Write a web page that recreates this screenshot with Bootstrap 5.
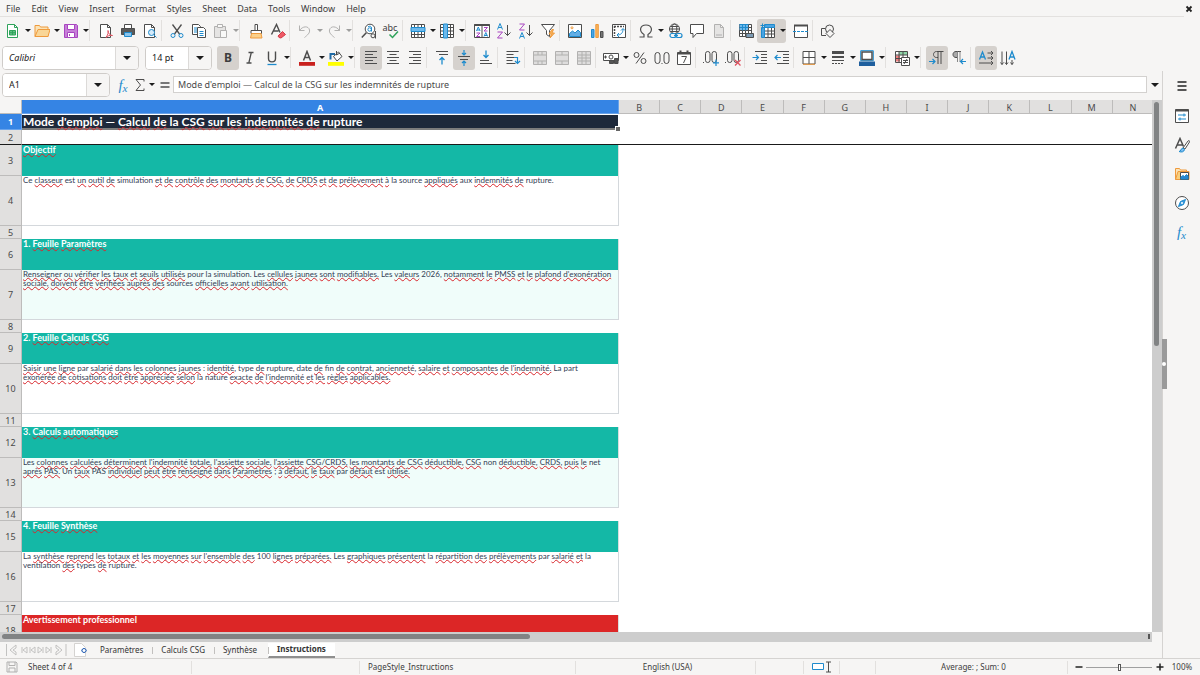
<!DOCTYPE html>
<html lang="fr">
<head>
<meta charset="utf-8">
<meta name="viewport" content="width=device-width, initial-scale=1">
<title>Calcul CSG - Instructions</title>
<link href="https://cdn.jsdelivr.net/npm/bootstrap@5.3.0/dist/css/bootstrap.min.css" rel="stylesheet">
<style>
:root{--ink:#3d3d3d;--line:#d5d3d1;--face:#f6f5f4;--blue:#1e8bcd}
body{font-family:"Noto Sans","Open Sans",sans-serif;font-size:8px;line-height:12px;color:var(--ink);background:var(--face)}
button{background:none;border:0;padding:0;color:inherit;font:inherit}
svg{display:block;fill:none;stroke:#4d4d4d;stroke-width:1}
.ic{width:16px;height:16px}
.menubar{height:17px;font-size:9px;padding-left:6px;flex:none}
.menubar .rule{position:absolute;left:0;right:16px;bottom:0;height:1px;background:#e3e1df}
.menubar a{color:var(--ink);text-decoration:none;line-height:17px}
.menulist{gap:11px}
.closer{margin-right:6px;width:10px}
.toolrow{height:27px;padding-left:2px;flex:none}
.tb{width:22px;height:24px;border-radius:3px;display:flex;align-items:center;justify-content:center;flex:none}
.tb.on,.dd.on{background:#d5d1cd}
.tb.on.left{border-radius:3px 0 0 3px}.dd.on{border-radius:0 3px 3px 0}
.dd{width:7px;height:24px;flex:none;display:flex;align-items:center;justify-content:center}
.caret{width:0;height:0;border:3px solid transparent;border-top:3px solid #1c1c1c;border-bottom:0}
.caret.big{border-width:4px 4px 0}
.off{opacity:.4}
.tsep{width:5px;height:21px;flex:none;border-left:1px solid #e2e0de}
.dd + .tsep{width:6px}
.letter{font-size:12px;line-height:20px}
.combo{border:1px solid #cfccc9;border-radius:4px;background:#fff;overflow:hidden;height:24px;flex:none;display:flex}
.combo input{border:0;outline:0;padding:0 6px;min-width:0;flex:1;color:#222;font-size:9px;background:#fff}
.combo button{width:23px;background:var(--face);border-left:1px solid #dcdad8;display:flex;align-items:center;justify-content:center}
.c-font{width:137px}.c-size{width:67px;margin:0 5px 0 6px}.c-name{width:108px}
.formula{height:29px;padding:0 0 2px 2px}
.formula .tb{width:18px}
.formula .fx-text{height:17px;border:1px solid #d3d1cf;background:#fff;font-size:9px;color:#4a4a4a;padding:0 4px;outline:0;min-width:0;border-radius:0}
.sumdd{margin-right:2px}
.fxg{font:italic 15px/16px "Liberation Serif",serif;color:var(--blue)}
.sidebar{width:38px;border-left:1px solid var(--line);padding-top:6px}
.sidebar button{height:29px;width:100%;display:flex;align-items:center;justify-content:center}
.sidebar .burger{height:18px;margin-bottom:6px}
.sidegrip{position:absolute;left:-1px;top:268px;width:5px;height:50px;background:#9a9a9a}
.sidegrip::after{content:"";position:absolute;left:0;top:23px;width:4px;height:4px;border-radius:50%;background:#fff}
.sheetbox{background:#fff;overflow:hidden;min-height:0}
.minh0{min-height:0;min-width:0}
.grid{table-layout:fixed;width:calc(100% + 2px);border-collapse:separate;border-spacing:0}
.grid .cn{width:22px}.grid .ca{width:597px}
.grid th{font-weight:400;font-size:9px;line-height:11px;text-align:center;background:#e1e0df;color:#4a4a4a;border-right:1px solid #bdbcbb;border-bottom:1px solid #bdbcbb;padding:0;vertical-align:middle}
.grid thead th{height:14px;padding-top:1px}
.grid thead th:first-child{background:var(--face)}
.grid th.sel{background:#3584e4;color:#fff;font-weight:700;border-color:#6aa3ea}
.grid td{padding:0;vertical-align:top;white-space:nowrap;font-family:Lato,sans-serif}
.grid .acell{padding-left:1px}
.title-row{height:16px}.title-row .acell{background:#1e293b;color:#fff;font-size:12px;line-height:13px;font-weight:700;border-top:1px solid #fff;border-bottom:2px solid #7d7d7d;position:relative;border-right:1px solid #fff}
.handle{position:absolute;right:-2px;bottom:-3px;width:4px;height:4px;background:#666;outline:1px solid #fff}
.frozen{height:15px}.frozen td{border-bottom:1px solid #1a1a1a}.frozen th{border-bottom-color:#1a1a1a}
.sec{height:31px}.sec .acell{background:#14b8a6;color:#fff;font-weight:700;font-size:9px;line-height:9px;border-right:1px solid #d9dede}
.sec.warn .acell{background:#dc2626}
.txt{height:50px}.txt .acell{color:#334155;font-size:8px;line-height:9px;border-right:1px solid #d4d8dc;border-bottom:1px solid #d4d8dc}
.txt.mint .acell{background:#f0fdfa}
.gap13{height:13px}
u{text-decoration:underline wavy #d8262c 1px;text-decoration-skip-ink:none;text-underline-offset:0}
.vbar{width:10px;background:#cdcdcd;padding:2px 3px 0 2px}
.vbar div{height:46%;background:#818384;border-radius:3px}
.hbar{height:10px;margin-right:10px;background:#cdcdcd;padding:2px 2px 3px;display:flex;justify-content:space-between}
.hbar .th1{width:46%;background:#818384;border-radius:3px}.hbar .th2{width:2px;background:#555}
.tabs{height:16px;padding-left:6px}
.addsheet{margin:0 4px 0 7px}
.tabs button.tabx{height:15px;padding:0 9px 0 8px;border-left:1px solid transparent;position:relative;color:#333}
.tabs .tabx + .tabx::before{content:"";position:absolute;left:-1px;top:4px;height:7px;border-left:1px solid #c2c0be}
.tabs .tabx.cur{background:#fff;font-weight:700;border-bottom:2px solid #8f8f8f;margin-left:2px}
.statusbar{height:17px;border-top:1px solid var(--line)}
.statusbar > div{border-right:1px solid #e2e0de;height:13px;display:flex;align-items:center;justify-content:center;flex:none}
.w2p{width:2%}.w3p{width:3%}.w4p{width:4%}.w14p{width:14%}.w15p{width:15%}.w18p{width:18%}
.zoombox{width:8%;padding:0 0 0 7px}
.zoomer{appearance:none;flex:1;min-width:0;height:9px;background:linear-gradient(#a0a0a0,#a0a0a0) center/100% 1px no-repeat;margin:0 4px 0 3px}
.zoomer::-webkit-slider-thumb{appearance:none;width:3px;height:7px;border:1px solid #555;background:#fff}
.bold{stroke:#222;stroke-width:1.5}
.b{stroke:#1e8bcd}.o{stroke:#ef9a3c}.g{stroke:#2fa35b}.p{stroke:#a845c0}.r{stroke:#e05260}
</style>
</head>
<body class="vh-100 d-flex flex-column overflow-hidden">
<nav class="menubar position-relative d-flex align-items-center justify-content-between">
 <div class="menulist d-flex"><a href="#">File</a><a href="#">Edit</a><a href="#">View</a><a href="#">Insert</a><a href="#">Format</a><a href="#">Styles</a><a href="#">Sheet</a><a href="#">Data</a><a href="#">Tools</a><a href="#">Window</a><a href="#">Help</a></div>
 <button class="closer" aria-label="Close"><svg width="10" height="10" viewBox="0 0 10 10"><path stroke="#222" stroke-width="1.800" d="M2.500 2.500l5 5M7.500 2.500l-5 5"/></svg></button>
 <span class="rule"></span>
</nav>

<div class="toolrow d-flex align-items-center">
 <button class="tb" aria-label="New"><svg class="ic" viewBox="0 0 16 16"><path class="g" fill="#fff" d="M2.500 1.500h7l3 3v10h-10z"/><path class="g" d="M9.500 1.500v3h3"/><path class="g" fill="#5fc283" d="M4.500 7.500h6v4.500h-6zM4.500 9.700h6M7.500 7.500v4.500"/></svg></button><button class="dd" aria-label="New options"><i class="caret"></i></button>
 <button class="tb" aria-label="Open"><svg class="ic" viewBox="0 0 16 16"><path class="o" fill="#fbe3b6" d="M1 13.500v-11h4.500l1 1.500h7.500v9.500z"/><path class="o" fill="#f9d697" d="M1 13.500l3-7h12l-2 7z"/></svg></button><button class="dd" aria-label="Open options"><i class="caret"></i></button>
 <button class="tb" aria-label="Save"><svg class="ic" viewBox="0 0 16 16"><path class="p" fill="#c77fd8" d="M1.500 1.500h12l1 1v12h-13z"/><path class="p" fill="#fff" d="M4.500 1.500h7v5h-7zM4.500 9.500h7v5h-7z"/><path class="p" d="M6.500 11v2"/></svg></button><button class="dd" aria-label="Save options"><i class="caret"></i></button>
 <i class="tsep"></i>
 <button class="tb" aria-label="Export as PDF"><svg class="ic" viewBox="0 0 16 16"><path fill="#fff" d="M2.500 1.500h7l3 3v10h-10z"/><path d="M9.500 1.500v3h3"/><path class="r" fill="#fff" d="M8 14.500c2-3 2.500-5 2-7 0 3 2 5 4.500 5-3-.6-5 .5-6.500 2z"/></svg></button>
 <button class="tb" aria-label="Print"><svg class="ic" viewBox="0 0 16 16"><path fill="#fff" d="M4.500 1.500h7v4h-7z"/><path fill="#5a5a5a" d="M1.500 5.500h13v6h-13z"/><path class="b" fill="#8cc4ec" d="M4.500 9.500h7v4h-7z"/></svg></button>
 <button class="tb" aria-label="Print Preview"><svg class="ic" viewBox="0 0 16 16"><path fill="#fff" d="M2.500 1.500h7l3 3v10h-10z"/><path d="M9.500 1.500v3h3"/><circle class="b" cx="9.500" cy="9.500" r="3" fill="#d6ebfa"/><path class="b" d="M11.800 11.800l2.700 2.700"/></svg></button>
 <i class="tsep"></i>
 <button class="tb" aria-label="Cut"><svg class="ic" viewBox="0 0 16 16"><path stroke-width="1.300" d="M3.500 1.500l7 9.500M12.500 1.500l-7 9.500"/><circle class="b" cx="4" cy="12.500" r="2"/><circle class="b" cx="12" cy="12.500" r="2"/></svg></button>
 <button class="tb" aria-label="Copy"><svg class="ic" viewBox="0 0 16 16"><path fill="#fff" d="M1.500 1.500h6l2 2v8h-8z"/><path fill="#fff" d="M6.500 4.500h6l2 2v8h-8z"/><path class="b" d="M3 5h3M3 7h3M3 9h3M8.500 8.500h4M8.500 10.500h4M8.500 12.500h4"/></svg></button>
 <button class="tb off" aria-label="Paste"><svg class="ic" viewBox="0 0 16 16"><path fill="#ccc" d="M1.500 3.500h11v11h-11z"/><path fill="#fff" d="M4.500 1.500h5v3h-5zM7.500 7.500h6v7h-6z"/></svg></button><button class="dd off" aria-label="Paste options"><i class="caret"></i></button>
 <i class="tsep"></i>
 <button class="tb" aria-label="Clone formatting"><svg class="ic" viewBox="0 0 16 16"><path fill="#fff" d="M7 1.500h2.500v6H7zM3 7.500h10.500v3H3z"/><path class="o" fill="#fbd08b" d="M3.500 10.500h9.500l1 4.500H2.500z"/></svg></button>
 <button class="tb" aria-label="Clear formatting"><svg class="ic" viewBox="0 0 16 16"><path stroke-width="1.400" d="M1.500 11.500l5-10 3.500 8M3.500 8h5"/><path d="M8 13l4.500-4.500 3 3-4.500 3.500-2-.5z" fill="#ee5a66" stroke="#d33a48"/></svg></button>
 <i class="tsep"></i>
 <button class="tb off" aria-label="Undo"><svg class="ic" viewBox="0 0 16 16"><path d="M2.500 2.500v5h5M2.500 7.500c3-4.500 9-5 10-.5.600 3-2 5-5 7.500"/></svg></button><button class="dd off" aria-label="Undo options"><i class="caret"></i></button>
 <button class="tb off" aria-label="Redo"><svg class="ic" viewBox="0 0 16 16"><path d="M13.500 2.500v5h-5M13.500 7.500c-3-4.500-9-5-10-.5-.600 3 2 5 5 7.500"/></svg></button><button class="dd off" aria-label="Redo options"><i class="caret"></i></button>
 <i class="tsep"></i>
 <button class="tb" aria-label="Find and Replace"><svg class="ic" viewBox="0 0 16 16"><path stroke-width="1.500" d="M5.500 9.500L.8 14.500"/><circle cx="9" cy="6" r="4.800" fill="#fff"/><circle class="b" cx="8.600" cy="6.500" r="1.700"/><path class="b" d="M7 3.800c2-1 3.500-.5 3.500 1.200v3.500"/><circle cx="12" cy="12.800" r="2" fill="#f6f5f4"/><path d="M14.500 8v7.500"/></svg></button>
 <button class="tb" aria-label="Spelling"><svg class="ic overflow-visible" viewBox="0 0 16 16"><text x="-.5" y="7.500" font-size="9" fill="#3d3d3d" stroke="none">abc</text><path class="g" stroke-width="1.500" d="M6.500 11.500l3 3 5.500-6"/></svg></button>
 <i class="tsep"></i>
 <button class="tb" aria-label="Row"><svg class="ic" viewBox="0 0 16 16"><path fill="#fff" d="M1.500 1.500h13v13h-13z"/><path d="M1.500 11.500h13M4.500 1.500v13M8 1.500v13M11.500 1.500v13M1.500 8.500h13"/><path fill="#6db9ec" class="b" d="M1 4.500h14v4H1z"/></svg></button><button class="dd" aria-label="Row options"><i class="caret"></i></button>
 <button class="tb" aria-label="Column"><svg class="ic" viewBox="0 0 16 16"><path fill="#fff" d="M1.500 1.500h13v13h-13z"/><path d="M11.500 1.500v13M1.500 4.500h13M1.500 8h13M1.500 11.500h13"/><path fill="#6db9ec" class="b" d="M4.500 1h4v14h-4z"/></svg></button><button class="dd" aria-label="Column options"><i class="caret"></i></button>
 <i class="tsep"></i>
 <button class="tb" aria-label="Sort"><svg class="ic" viewBox="0 0 16 16"><path fill="#fff" d="M.5 1.500h15v13H.500zM8 3v11.500"/><path stroke-width="2" d="M.5 2h15"/><path class="b" d="M2.500 8l1.800-4 1.800 4M3 7h2.600M10 13.500l1.800-4 1.800 4M10.500 12.500h2.600"/><path class="p" d="M10 4.500h3.500L10 8h3.500M2.500 10H6l-3.500 3.500H6"/></svg></button>
 <button class="tb" aria-label="Sort Ascending"><svg class="ic" viewBox="0 0 16 16"><path class="b" d="M1.500 6.500l2.500-6 2.500 6M2.300 4.500h3.400"/><path class="p" d="M1.500 9h5l-5 6h5"/><path d="M11.500 2v10.500M8.500 9.500l3 3 3-3"/></svg></button>
 <button class="tb" aria-label="Sort Descending"><svg class="ic" viewBox="0 0 16 16"><path class="p" d="M1.500 1h5l-5 6h5"/><path class="b" d="M1.500 15.500l2.500-6 2.500 6M2.300 13.500h3.400"/><path d="M11.500 2v10.500M8.500 9.500l3 3 3-3"/></svg></button>
 <button class="tb" aria-label="AutoFilter"><svg class="ic" viewBox="0 0 16 16"><path fill="#fff" d="M1.500 1.500h13l-5 6v6l-3-2v-4z"/><path fill="#f8b35c" class="o" d="M12 6.500l-3 4.500h2.500L10 15l4.500-5H12l1.500-3.500z"/></svg></button>
 <i class="tsep"></i>
 <button class="tb" aria-label="Image"><svg class="ic" viewBox="0 0 16 16"><path fill="#fff" d="M1.500 1.500h13v13h-13z"/><path fill="#62aee6" class="b" d="M2.500 13.500v-3l3-2.500 2.500 2 3-3 2.500 2.500v4z"/><circle class="o" cx="5" cy="4.800" r="1"/></svg></button>
 <button class="tb" aria-label="Chart"><svg class="ic" viewBox="0 0 16 16"><path fill="#4da3e3" class="b" d="M2.500 6.500h2.500v8H2.500z"/><path fill="#f8b35c" class="o" d="M6.800 1.500h2.500v13H6.800z"/><path fill="#777" d="M11.500 8.500H14v6h-2.500z"/></svg></button>
 <button class="tb" aria-label="Pivot Table"><svg class="ic" viewBox="0 0 16 16"><path fill="#fff" d="M1.500 1.500h13v13h-13z"/><path stroke-width="1.500" stroke-dasharray="2 1" d="M3 3.500h10M3.500 3v10"/><path class="b" d="M6 12c4 0 6-2 6-6M10 7.500l2-2 2 2M8 10l-2 2 2 2"/></svg></button>
 <i class="tsep"></i>
 <button class="tb" aria-label="Special Character"><svg class="ic" viewBox="0 0 16 16"><path stroke-width="1.200" d="M1.500 14h4.500v-2.500C.5 8 2 2 8 2s7.500 6 2 9.500V14h4.500"/></svg></button><button class="dd" aria-label="Character options"><i class="caret"></i></button>
 <button class="tb" aria-label="Hyperlink"><svg class="ic" viewBox="0 0 16 16"><circle cx="7.500" cy="6" r="5" fill="#fff"/><ellipse cx="7.500" cy="6" rx="2.300" ry="5"/><path d="M2.500 6h10M3.300 3.500h8.400M3.300 8.500h8.400"/><g class="b" fill="#f6f5f4" stroke-width="1.200"><rect x="3" y="10.500" width="6" height="4" rx="2"/><rect x="9" y="10.500" width="6" height="4" rx="2"/><path d="M7 12.500h4"/></g></svg></button>
 <button class="tb" aria-label="Comment"><svg class="ic" viewBox="0 0 16 16"><path fill="#fff" d="M1.500 1.500h13v9h-7l-3.500 4v-4H1.500z"/></svg></button>
 <button class="tb off" aria-label="Headers and Footers"><svg class="ic" viewBox="0 0 16 16"><path fill="#ccc" d="M3.500 1.500h6l3 3v10h-9zM9.500 1.500v3h3M5 12h6"/></svg></button>
 <i class="tsep"></i>
 <button class="tb" aria-label="Print Area"><svg class="ic" viewBox="0 0 16 16"><path fill="#fff" d="M1.500 1.500h12v12h-12z"/><path fill="#6db9ec" stroke="none" d="M1.500 1.500h9v6h-9z"/><path d="M1.500 4.500h12M1.500 7.500h12M1.500 10.500h12M4.500 7.500v6M7.500 7.500v6M10.500 1.500v12"/><path class="b" d="M1.500 4.500h9M4.500 1.500v6M7.500 1.500v6M1.500 1.500h9"/><path fill="#7d9cb5" d="M8 10.500h7.500v4H8z"/></svg></button>
 <button class="tb on left" aria-label="Freeze Rows and Columns"><svg class="ic" viewBox="0 0 16 16"><path fill="#fff" d="M4.500 4.500h10v10h-10zM4.500 8h10M4.500 11h10M8 4.500v10M11.500 4.500v10"/><path fill="#4aa3e2" class="b" d="M1.500 4.500h3v10h-3zM4.500 1.500h10v3h-10z"/><path class="b" d="M2.500.5v5M.5 2.500h5"/></svg></button><button class="dd on" aria-label="Freeze options"><i class="caret"></i></button>
 <button class="tb ms-1" aria-label="Split Window"><svg class="ic" viewBox="0 0 16 16"><path fill="#fff" d="M1.500 2.500h13v12h-13z"/><path stroke-width="2" d="M1 2.500h14"/><path class="b" stroke-dasharray="3 1" d="M0 8.500h16"/></svg></button>
 <i class="tsep"></i>
 <button class="tb" aria-label="Show Draw Functions"><svg class="ic" viewBox="0 0 16 16"><path d="M6 12.500H1.500v-7H5"/><circle cx="9.500" cy="6" r="4"/><path fill="#f6f5f4" d="M10 6.500l4 4-4 4-4-4z"/></svg></button>
</div>

<div class="toolrow d-flex align-items-center">
 <div class="combo c-font"><input class="fst-italic" aria-label="Font name" value="Calibri"><button aria-label="Font list"><i class="caret big"></i></button></div>
 <div class="combo c-size"><input aria-label="Font size" value="14 pt"><button aria-label="Size list"><i class="caret big"></i></button></div>
 <button class="tb on" aria-label="Bold"><b class="letter">B</b></button>
 <button class="tb" aria-label="Italic"><svg class="ic" viewBox="0 0 16 16"><path stroke-width="1.300" d="M6.500 2.500h5M4.500 13h5M9.300 2.500L6.800 13"/></svg></button>
 <button class="tb" aria-label="Underline"><svg class="ic" viewBox="0 0 16 16"><path stroke-width="1.400" d="M4.500 1.500v7c0 4.500 7 4.500 7 0v-7"/><path class="b" stroke-width="1.300" d="M3.500 14.500h9"/></svg></button><button class="dd" aria-label="Underline options"><i class="caret"></i></button>
 <i class="tsep"></i>
 <button class="tb" aria-label="Font Color"><svg class="ic" viewBox="0 0 16 16"><path stroke-width="1.500" d="M4.500 10.500L8 1.500l3.500 9M5.500 7.500h5"/><path fill="#c9211e" stroke="none" d="M0 12h16v3.800H0z"/></svg></button><button class="dd" aria-label="Font colors"><i class="caret"></i></button>
 <button class="tb" aria-label="Highlighting"><svg class="ic" viewBox="0 0 16 16"><path stroke="#1e6aa5" stroke-width="2" d="M2.500 9.500V4H7"/><path fill="#fff" d="M5.500 6.500l5-4.500 3.500 4.500-5 4.500z"/><path d="M8.500 5V1M8.500 5L12 3"/><path fill="#ff0" stroke="none" d="M0 12h16v3.800H0z"/></svg></button><button class="dd" aria-label="Highlight colors"><i class="caret"></i></button>
 <i class="tsep"></i>
 <button class="tb on" aria-label="Align Left"><svg class="ic" viewBox="0 0 16 16"><path d="M2 1.500h12M2 4.500h8M2 7.500h12M2 10.500h8M2 13.500h12"/></svg></button>
 <button class="tb" aria-label="Center"><svg class="ic" viewBox="0 0 16 16"><path d="M2 1.500h12M4.500 4.500h7M2 7.500h12M4.500 10.500h7M2 13.500h12"/></svg></button>
 <button class="tb" aria-label="Align Right"><svg class="ic" viewBox="0 0 16 16"><path d="M2 1.500h12M6 4.500h8M2 7.500h12M6 10.500h8M2 13.500h12"/></svg></button>
 <i class="tsep"></i>
 <button class="tb" aria-label="Align Top"><svg class="ic" viewBox="0 0 16 16"><path d="M2 1.500h12M5 4.500h9"/><path class="b" stroke-width="1.300" d="M8 14.500V8M5.500 10L8 7.500l2.500 2.500"/></svg></button>
 <button class="tb on" aria-label="Center Vertically"><svg class="ic" viewBox="0 0 16 16"><path d="M2 6.500h12M4 9.500h8"/><path class="b" stroke-width="1.200" d="M8 0v5M6 3l2 2 2-2M8 16v-5M6 13l2-2 2 2"/></svg></button>
 <button class="tb" aria-label="Align Bottom"><svg class="ic" viewBox="0 0 16 16"><path d="M2 10.500h9M2 13.500h12"/><path class="b" stroke-width="1.300" d="M8 .5V7M5.500 5L8 7.500 10.500 5"/></svg></button>
 <i class="tsep"></i>
 <button class="tb" aria-label="Wrap Text"><svg class="ic" viewBox="0 0 16 16"><path d="M1.500 1.500h12M1.500 4.500h7M1.500 7.500h9M1.500 10.500h6M1.500 13.500h9"/><path class="b" stroke-width="1.200" d="M9 7.500h3.500V13M10 11l2.500 2.500L15 11"/></svg></button>
 <i class="tsep"></i>
 <button class="tb off" aria-label="Merge and Center Cells"><svg class="ic" viewBox="0 0 16 16"><path fill="#bbb" d="M1.500 1.500h13v13h-13zM1.500 5h13M1.500 11h13M6 1.500V5M10 1.500V5M6 11v3.500M10 11v3.500"/></svg></button>
 <button class="tb off" aria-label="Merge Cells"><svg class="ic" viewBox="0 0 16 16"><path fill="#bbb" d="M1.500 1.500h13v13h-13zM1.500 5h13M1.500 11h13M8 1.500V5M8 11v3.500"/></svg></button>
 <button class="tb off" aria-label="Unmerge Cells"><svg class="ic" viewBox="0 0 16 16"><path fill="#bbb" d="M1.500 1.500h13v13h-13zM1.500 5h13M1.500 8h13M1.500 11h13M6 1.500v13M10 1.500v13"/></svg></button>
 <i class="tsep"></i>
 <button class="tb" aria-label="Format as Currency"><svg class="ic" viewBox="0 0 16 16"><path fill="#fff" d="M.5 3.500h15v7H.500z"/><circle cx="8" cy="7" r="2"/><path fill="#555" d="M6.500 10.500h4v3h-4zM11.500 8.500h3.500v5h-3.500zM2 6h1v2H2z"/></svg></button><button class="dd" aria-label="Currency options"><i class="caret"></i></button>
 <button class="tb" aria-label="Format as Percent"><svg class="ic" viewBox="0 0 16 16"><circle cx="4.500" cy="5" r="2.500"/><circle cx="11.500" cy="11" r="2.500"/><path d="M12 2.500L4 13.500"/></svg></button>
 <button class="tb" aria-label="Format as Number"><svg class="ic" viewBox="0 0 16 16"><rect x="1" y="2.500" width="5" height="11" rx="2.500"/><rect x="10" y="2.500" width="5" height="11" rx="2.500"/><path d="M7.500 13.500h1"/></svg></button>
 <button class="tb" aria-label="Format as Date"><svg class="ic" viewBox="0 0 16 16"><path fill="#fff" d="M1.500 2.500h13v12h-13z"/><path stroke-width="2" d="M1.500 3.500h13M4.500.5v3M11.500.5v3"/><path d="M5.500 6.500h5l-3 6.500"/></svg></button>
 <i class="tsep"></i>
 <button class="tb" aria-label="Add Decimal Place"><svg class="ic" viewBox="0 0 16 16"><rect x="2.500" y="1.500" width="4.500" height="11" rx="2.200"/><rect x="9" y="1.500" width="4.500" height="11" rx="2.200"/><path d="M0 12.500h1"/><path class="b" stroke-width="1.200" d="M13 9.500v6.500M10 12.800h6"/></svg></button>
 <button class="tb" aria-label="Delete Decimal Place"><svg class="ic" viewBox="0 0 16 16"><rect x="2.500" y="1.500" width="4.500" height="11" rx="2.200"/><rect x="9" y="1.500" width="4.500" height="11" rx="2.200"/><path d="M0 12.500h1"/><path class="r" stroke-width="1.300" d="M10 10l5.500 5.500M15.500 10L10 15.500"/></svg></button>
 <i class="tsep"></i>
 <button class="tb" aria-label="Increase Indent"><svg class="ic" viewBox="0 0 16 16"><path d="M3 1.500h12M9 4.500h6M9 7.500h6M9 10.500h6M3 13.500h12"/><path class="b" stroke-width="1.200" d="M.5 7.500H6M4 5l2.500 2.500L4 10"/></svg></button>
 <button class="tb" aria-label="Decrease Indent"><svg class="ic" viewBox="0 0 16 16"><path d="M3 1.500h12M9 4.500h6M9 7.500h6M9 10.500h6M3 13.500h12"/><path class="b" stroke-width="1.200" d="M1 7.500h6M3.500 5L1 7.500 3.500 10"/></svg></button>
 <i class="tsep"></i>
 <button class="tb" aria-label="Borders"><svg class="ic" viewBox="0 0 16 16"><path fill="#fff" d="M2 1.500h12v12.500H2zM8 1.500V14M2 7.500h12"/><path class="o" d="M2 14.300h12"/></svg></button><button class="dd" aria-label="Border options"><i class="caret"></i></button>
 <button class="tb" aria-label="Border Style"><svg class="ic" viewBox="0 0 16 16"><path stroke-width="3" d="M2 2.500h12"/><path stroke-width="2" d="M2 7h12"/><path d="M2 10.500h12"/><path stroke-dasharray="2 1" d="M2 13.500h12"/></svg></button><button class="dd" aria-label="Border styles"><i class="caret"></i></button>
 <button class="tb" aria-label="Border Color"><svg class="ic" viewBox="0 0 16 16"><path class="b" d="M1.700.7h12.600v10H1.700z"/><path fill="#fff" stroke-width="1.500" d="M3 2h10v7.500H3z"/><path fill="#1f5f9e" stroke="none" d="M0 11.500h16V16H0z"/></svg></button><button class="dd" aria-label="Border colors"><i class="caret"></i></button>
 <i class="tsep"></i>
 <button class="tb" aria-label="Conditional"><svg class="ic" viewBox="0 0 16 16"><path fill="#fff" d="M1.500 1.500h12v11h-12z"/><path fill="#8fd6a8" stroke="none" d="M5 2h8v3H5z"/><path fill="#f08080" stroke="none" d="M2 5.500h4v6H2z"/><path d="M1.500 5h12M1.500 8.500h12M5 1.500v11M9 1.500v11"/><path fill="#fff" d="M7.500 7.500h8v8h-8z"/><path d="M9 10.500h5M9 12.500h5M13 9l-3 5"/></svg></button><button class="dd" aria-label="Conditional options"><i class="caret"></i></button>
 <i class="tsep"></i>
 <button class="tb on" aria-label="Left-To-Right"><svg class="ic" viewBox="0 0 16 16"><path d="M14.500 1.500H7.500c-4 0-4 6 0 6H9M9 1.500v12.500M12 1.500v12.500"/><path class="b" stroke-width="1.200" d="M0 11.500h6M3.500 9L6 11.500 3.500 14"/></svg></button>
 <button class="tb" aria-label="Right-To-Left"><svg class="ic" viewBox="0 0 16 16"><path fill="#aaa" d="M10 1.500H5c-4 0-4 6 0 6h1.500V1.500"/><path d="M6.500 1.500V12M9 1.500V12" stroke="#888"/><path class="b" stroke-width="1.200" d="M9 11.500h6M12 9l-2.500 2.500L12 14"/></svg></button>
 <i class="tsep"></i>
 <button class="tb on" aria-label="Text direction left to right"><svg class="ic" viewBox="0 0 16 16"><path class="b" stroke-width="1.300" d="M1.500 9.500l3-7.500 3 7.500M2.500 7h4"/><path d="M9.500 3H15M13 1l2 2-2 2M9.500 8H15M13 6l2 2-2 2M1 13h14M13 11l2 2-2 2"/></svg></button>
 <button class="tb" aria-label="Text direction top to bottom"><svg class="ic" viewBox="0 0 16 16"><path class="b" stroke-width="1.300" d="M9 9.500l3-8 3 8M10 7h4"/><path d="M2 1.500v13M.5 12.500l1.500 2 1.500-2M6.500 1.500v13M5 12.500l1.500 2 1.500-2M12 10v4.500M10.500 12.500l1.500 2 1.500-2"/></svg></button>
</div>

<div class="d-flex flex-fill minh0">
<main class="flex-fill d-flex flex-column minh0">
 <div class="formula d-flex align-items-center flex-shrink-0">
  <div class="combo c-name"><input aria-label="Name Box" value="A1"><button aria-label="Names"><i class="caret big"></i></button></div>
  <button class="tb ms-1" aria-label="Function Wizard"><span class="fxg">f<sub>x</sub></span></button>
  <button class="ic" aria-label="Select Function"><svg class="ic" viewBox="0 0 16 16"><path d="M12 4.500V2.500H4l4.500 5.500L4 13.500h8v-2"/></svg></button>
  <button class="dd sumdd" aria-label="Sum options"><i class="caret"></i></button>
  <button class="ic" aria-label="Formula"><svg class="ic" viewBox="0 0 16 16"><path stroke-width="1.500" d="M3.500 6h9M3.500 10h9"/></svg></button>
  <input class="fx-text flex-fill" aria-label="Input line" value="Mode d'emploi — Calcul de la CSG sur les indemnités de rupture">
  <button class="dd mx-1" aria-label="Expand Formula Bar"><i class="caret big"></i></button>
 </div>

 <div class="d-flex flex-fill minh0">
 <div class="sheetbox flex-fill">
 <table class="grid">
  <colgroup><col class="cn"><col class="ca"><col span="13"></colgroup>
  <thead><tr><th></th><th class="sel">A</th><th>B</th><th>C</th><th>D</th><th>E</th><th>F</th><th>G</th><th>H</th><th>I</th><th>J</th><th>K</th><th>L</th><th>M</th><th>N</th></tr></thead>
  <tbody>
  <tr class="title-row"><th class="sel">1</th><td class="acell">Mode <u>d'emploi</u> — <u>Calcul</u> <u>de</u> la <u>CSG</u> <u>sur</u> <u>les</u> <u>indemnités</u> <u>de</u> rupture<span class="handle"></span></td><td colspan="13"></td></tr>
  <tr class="frozen"><th>2</th><td></td><td colspan="13"></td></tr>
  <tr class="sec"><th>3</th><td class="acell"><u>Objectif</u></td><td colspan="13"></td></tr>
  <tr class="txt"><th>4</th><td class="acell">Ce <u>classeur</u> est <u>un</u> <u>outil</u> <u>de</u> simulation <u>et</u> <u>de</u> <u>contrôle</u> <u>des</u> <u>montants</u> <u>de</u> <u>CSG,</u> <u>de</u> <u>CRDS</u> <u>et</u> <u>de</u> <u>prélèvement</u> <u>à</u> la source <u>appliqués</u> aux <u>indemnités</u> <u>de</u> rupture.</td><td colspan="13"></td></tr>
  <tr class="gap13"><th>5</th><td></td><td colspan="13"></td></tr>
  <tr class="sec"><th>6</th><td class="acell">1. <u>Feuille</u> <u>Paramètres</u></td><td colspan="13"></td></tr>
  <tr class="txt mint"><th>7</th><td class="acell"><u>Renseigner</u> <u>ou</u> <u>vérifier</u> <u>les</u> <u>taux</u> <u>et</u> <u>seuils</u> <u>utilisés</u> pour la simulation. Les <u>cellules</u> <u>jaunes</u> <u>sont</u> <u>modifiables.</u> Les <u>valeurs</u> 2026, <u>notamment</u> <u>le</u> <u>PMSS</u> <u>et</u> <u>le</u> <u>plafond</u> <u>d'exonération</u><br><u>sociale,</u> <u>doivent</u> <u>être</u> <u>vérifiées</u> <u>auprès</u> <u>des</u> sources <u>officielles</u> <u>avant</u> <u>utilisation.</u></td><td colspan="13"></td></tr>
  <tr class="gap13"><th>8</th><td></td><td colspan="13"></td></tr>
  <tr class="sec"><th>9</th><td class="acell">2. <u>Feuille</u> <u>Calculs</u> <u>CSG</u></td><td colspan="13"></td></tr>
  <tr class="txt"><th>10</th><td class="acell"><u>Saisir</u> <u>une</u> <u>ligne</u> par <u>salarié</u> <u>dans</u> <u>les</u> <u>colonnes</u> <u>jaunes</u> : <u>identité</u>, type <u>de</u> rupture, date <u>de</u> fin <u>de</u> <u>contrat</u>, <u>ancienneté</u>, <u>salaire</u> <u>et</u> <u>composantes</u> <u>de</u> <u>l'indemnité.</u> La part<br><u>exonérée</u> <u>de</u> <u>cotisations</u> <u>doit</u> <u>être</u> <u>appréciée</u> <u>selon</u> la nature <u>exacte</u> <u>de</u> <u>l'indemnité</u> <u>et</u> <u>les</u> <u>règles</u> <u>applicables.</u></td><td colspan="13"></td></tr>
  <tr class="gap13"><th>11</th><td></td><td colspan="13"></td></tr>
  <tr class="sec"><th>12</th><td class="acell">3. <u>Calculs</u> <u>automatiques</u></td><td colspan="13"></td></tr>
  <tr class="txt mint"><th>13</th><td class="acell">Les <u>colonnes</u> <u>calculées</u> <u>déterminent</u> <u>l'indemnité</u> <u>totale,</u> <u>l'assiette</u> <u>sociale,</u> <u>l'assiette</u> <u>CSG/CRDS,</u> <u>les</u> <u>montants</u> <u>de</u> <u>CSG</u> <u>déductible,</u> <u>CSG</u> non <u>déductible,</u> <u>CRDS,</u> <u>puis</u> <u>le</u> net<br><u>après</u> <u>PAS.</u> Un <u>taux</u> PAS <u>individuel</u> <u>peut</u> <u>être</u> <u>renseigné</u> <u>dans</u> <u>Paramètres</u> ; <u>à</u> <u>défaut,</u> <u>le</u> <u>taux</u> par <u>défaut</u> est <u>utilisé.</u></td><td colspan="13"></td></tr>
  <tr class="gap13"><th>14</th><td></td><td colspan="13"></td></tr>
  <tr class="sec"><th>15</th><td class="acell">4. <u>Feuille</u> <u>Synthèse</u></td><td colspan="13"></td></tr>
  <tr class="txt"><th>16</th><td class="acell">La <u>synthèse</u> <u>reprend</u> <u>les</u> <u>totaux</u> <u>et</u> <u>les</u> <u>moyennes</u> <u>sur</u> <u>l'ensemble</u> <u>des</u> 100 <u>lignes</u> <u>préparées.</u> Les <u>graphiques</u> <u>présentent</u> la <u>répartition</u> <u>des</u> <u>prélèvements</u> par <u>salarié</u> <u>et</u> la<br>ventilation <u>des</u> types <u>de</u> rupture.</td><td colspan="13"></td></tr>
  <tr class="gap13"><th>17</th><td></td><td colspan="13"></td></tr>
  <tr class="sec warn"><th>18</th><td class="acell">Avertissement professionnel</td><td colspan="13"></td></tr>
  </tbody>
 </table>
 </div>
 <div class="vbar flex-shrink-0"><div></div></div>
 </div>
 <div class="hbar flex-shrink-0"><div class="th1"></div><div class="th2"></div></div>
 <div class="tabs d-flex align-items-center flex-shrink-0">
  <svg class="off" width="61" height="14" viewBox="0 0 61 14" role="img" aria-label="Sheet navigation"><path stroke="#777" d="M.5 1v12M10 2L4 7l6 5v-3l-3-2 3-2zM21 4l-4 3 4 3zM29 4l-4 3 4 3zM16 4v6M24 4v6M32 4l4 3-4 3zM40 4l4 3-4 3zM37 4v6M45 4v6M50 2l6 5-6 5v-3l3-2-3-2zM60 1v12"/></svg>
  <button class="addsheet" aria-label="Add Sheet"><svg width="13" height="14" viewBox="0 0 13 14"><path fill="#fff" stroke="#d5d3d1" d="M.5.500h7l4 4v9H.5z"/><path stroke="#2a62b5" stroke-width="1.500" d="M10 5v5M7.500 7.500h5"/><circle cx="10" cy="7.500" r="2" stroke="#2a62b5" fill="#fff"/></svg></button>
  <button class="tabx">Paramètres</button><button class="tabx">Calculs CSG</button><button class="tabx">Synthèse</button><button class="tabx cur">Instructions</button>
 </div>
</main>
<aside class="sidebar flex-shrink-0 position-relative" aria-label="Sidebar">
 <span class="sidegrip"></span>
 <button class="burger" aria-label="Sidebar Settings"><svg class="ic" viewBox="0 0 16 16"><path class="bold" d="M3.500 4h9M3.500 8h9M3.500 12h9"/></svg></button>
 <button aria-label="Properties"><svg class="ic" viewBox="0 0 16 16"><path fill="#fff" d="M1.500 1.500h13v13h-13z"/><path stroke-width="2" d="M1.500 2.500h13"/><path class="b" d="M4 7h8M10 5.500V8.500M4 11h8M6 9.500v3"/></svg></button>
 <button aria-label="Styles"><svg class="ic" viewBox="0 0 16 16"><path stroke-width="1.500" d="M1.500 11.500L6 1.500l3.500 8M3 8h5.500"/><path fill="#fff" d="M9 11l5-7c1-1 2 0 1.500 1L11 12z"/><path fill="#7dbcf0" class="b" d="M5 14.500c2 0 1.500-3 4-3.500l1.500 1.500c-.5 2.500-3 3-5.500 2z"/></svg></button>
 <button aria-label="Gallery"><svg class="ic" viewBox="0 0 16 16"><path class="o" fill="#fbe3b6" d="M1.500 13.500v-11h4l1 1.500h6v2"/><path class="o" fill="#f8cf7c" d="M1.500 13.500l2.500-8h11v8z"/><path fill="#fff" d="M6.500 6.500h8v7h-8z"/><path class="b" fill="#2a86d0" d="M7 13v-2l2-1.500 1.500 1 2-2L14 10v3z"/></svg></button>
 <button aria-label="Navigator"><svg class="ic" viewBox="0 0 16 16"><circle cx="8" cy="8" r="6.500" fill="#fff"/><path class="b" fill="#3a97dd" d="M11.500 4.500L9.500 9.500l-5 2 2-5z"/><circle cx="8" cy="8" r="1" fill="#fff" stroke="none"/></svg></button>
 <button aria-label="Functions"><span class="fxg">f<sub>x</sub></span></button>
</aside>
</div>

<footer class="statusbar d-flex align-items-center flex-shrink-0">
 <div class="border-0 w2p"><svg class="off" width="12" height="12" viewBox="0 0 12 12"><path d="M1 1h9l1 1v9H1zM3 1v3.500h6V1M3 11V7h6v4"/></svg></div>
 <div class="justify-content-start w14p ps-1">Sheet 4 of 4</div>
 <div class="w14p"></div>
 <div class="justify-content-start w18p ps-2">PageStyle_Instructions</div>
 <div class="w15p ps-1">English (USA)</div>
 <div class="w4p"></div>
 <div class="w3p"><svg width="22" height="12" viewBox="0 0 22 12"><path class="b" fill="#fff" d="M1.500 2.500h11v6h-11z"/><path d="M17.500 1v10M15 1h5M15 11h5"/></svg></div>
 <div class="w3p"></div>
 <div class="flex-fill ps-1">Average: ; Sum: 0</div>
 <div class="border-0 zoombox"><button aria-label="Zoom out"><svg width="8" height="8" viewBox="0 0 8 8"><path class="bold" d="M.5 4h7"/></svg></button><input class="zoomer" type="range" aria-label="Zoom" value="50"><button aria-label="Zoom in"><svg width="8" height="8" viewBox="0 0 8 8"><path class="bold" d="M.5 4h7M4 .5v7"/></svg></button></div>
 <div class="border-0 w3p">100%</div>
</footer>
<script src="https://cdn.jsdelivr.net/npm/bootstrap@5.3.0/dist/js/bootstrap.bundle.min.js"></script>
</body>
</html>
